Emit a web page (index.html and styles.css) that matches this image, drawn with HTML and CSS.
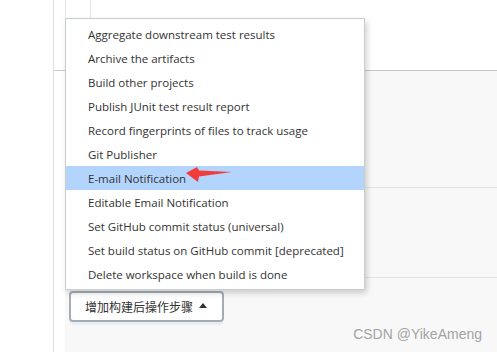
FILE: index.html
```html
<!DOCTYPE html>
<html lang="en">
<head>
    <meta charset="UTF-8">
    <title>Post-build Actions</title>
    <link rel="stylesheet" href="styles.css">
</head>
<body>
    <div class="side"></div>
    <div class="main">
        <div class="top">
            <div class="top-cell"></div>
        </div>
        <div class="section section-a"></div>
        <div class="section section-b"></div>
        <div class="section section-c">
            <button class="btn-add">增加构建后操作步骤 <span class="caret"></span></button>
        </div>

        <ul class="menu">
            <li>Aggregate downstream test results</li>
            <li>Archive the artifacts</li>
            <li>Build other projects</li>
            <li>Publish JUnit test result report</li>
            <li>Record fingerprints of files to track usage</li>
            <li>Git Publisher</li>
            <li class="active">E-mail Notification</li>
            <li>Editable Email Notification</li>
            <li>Set GitHub commit status (universal)</li>
            <li>Set build status on GitHub commit [deprecated]</li>
            <li>Delete workspace when build is done</li>
        </ul>

        <svg class="arrow" width="50" height="20" viewBox="0 0 50 20">
            <polygon points="0,7 11,1 13,4.5 46,6 13,10.5 12,16" fill="#f23b3b"/>
        </svg>
    </div>

    <div class="watermark">CSDN @YikeAmeng</div>
</body>
</html>
```

FILE: styles.css
```css
* {
    margin: 0;
    padding: 0;
    box-sizing: border-box;
}

body {
    display: flex;
    width: 497px;
    height: 352px;
    overflow: hidden;
    background: #fff;
    font-family: 'Open Sans', 'Noto Sans CJK SC', sans-serif;
    color: #333;
}

.side {
    width: 54px;
    flex-shrink: 0;
    border-right: 1px solid #dcdfe2;
}

.main {
    position: relative;
    flex: 1;
    display: flex;
    flex-direction: column;
}

.top {
    height: 71px;
    padding-left: 11px;
    border-bottom: 1px solid #c3cad2;
}

.top-cell {
    width: 26px;
    height: 100%;
    border-left: 1px solid #e3e5e7;
    border-right: 1px solid #e3e5e7;
}

.section {
    margin-left: 11px;
    background: #f8f8f8;
    border-bottom: 1px solid #e2e2e2;
}

.section-a {
    height: 117px;
}

.section-b {
    height: 90px;
}

.section-c {
    flex: 1;
    border-bottom: none;
    padding: 13px 0 0 4px;
}

.btn-add {
    display: inline-flex;
    align-items: center;
    gap: 6px;
    height: 31px;
    width: 155px;
    padding-left: 14px;
    background: #fff;
    border: 2px solid #a4adb6;
    border-radius: 4px;
    font-family: 'Noto Sans CJK SC', sans-serif;
    font-size: 12px;
    color: #333;
    box-shadow: 0 4px 0 -1px #e9eef2;
}

.caret {
    width: 0;
    height: 0;
    border-left: 4px solid transparent;
    border-right: 4px solid transparent;
    border-bottom: 5px solid #333;
    margin-top: -2px;
}

.menu {
    position: absolute;
    left: 11px;
    top: 18px;
    width: 300px;
    list-style: none;
    background: #fff;
    border: 1px solid #c8cdd2;
    padding: 3px 0;
    box-shadow: 2px 3px 6px rgba(0, 0, 0, 0.18);
}

.menu li {
    height: 24px;
    line-height: 26px;
    padding-left: 22px;
    font-size: 11.5px;
    color: #333;
    white-space: nowrap;
    overflow: hidden;
}

.menu li.active {
    background: #b3d4fc;
}

.arrow {
    position: absolute;
    left: 132px;
    top: 166px;
}

.watermark {
    position: absolute;
    right: 15px;
    bottom: 10px;
    font-family: 'Liberation Sans', Arial, sans-serif;
    font-size: 14px;
    color: #a3a3a3;
}
```
